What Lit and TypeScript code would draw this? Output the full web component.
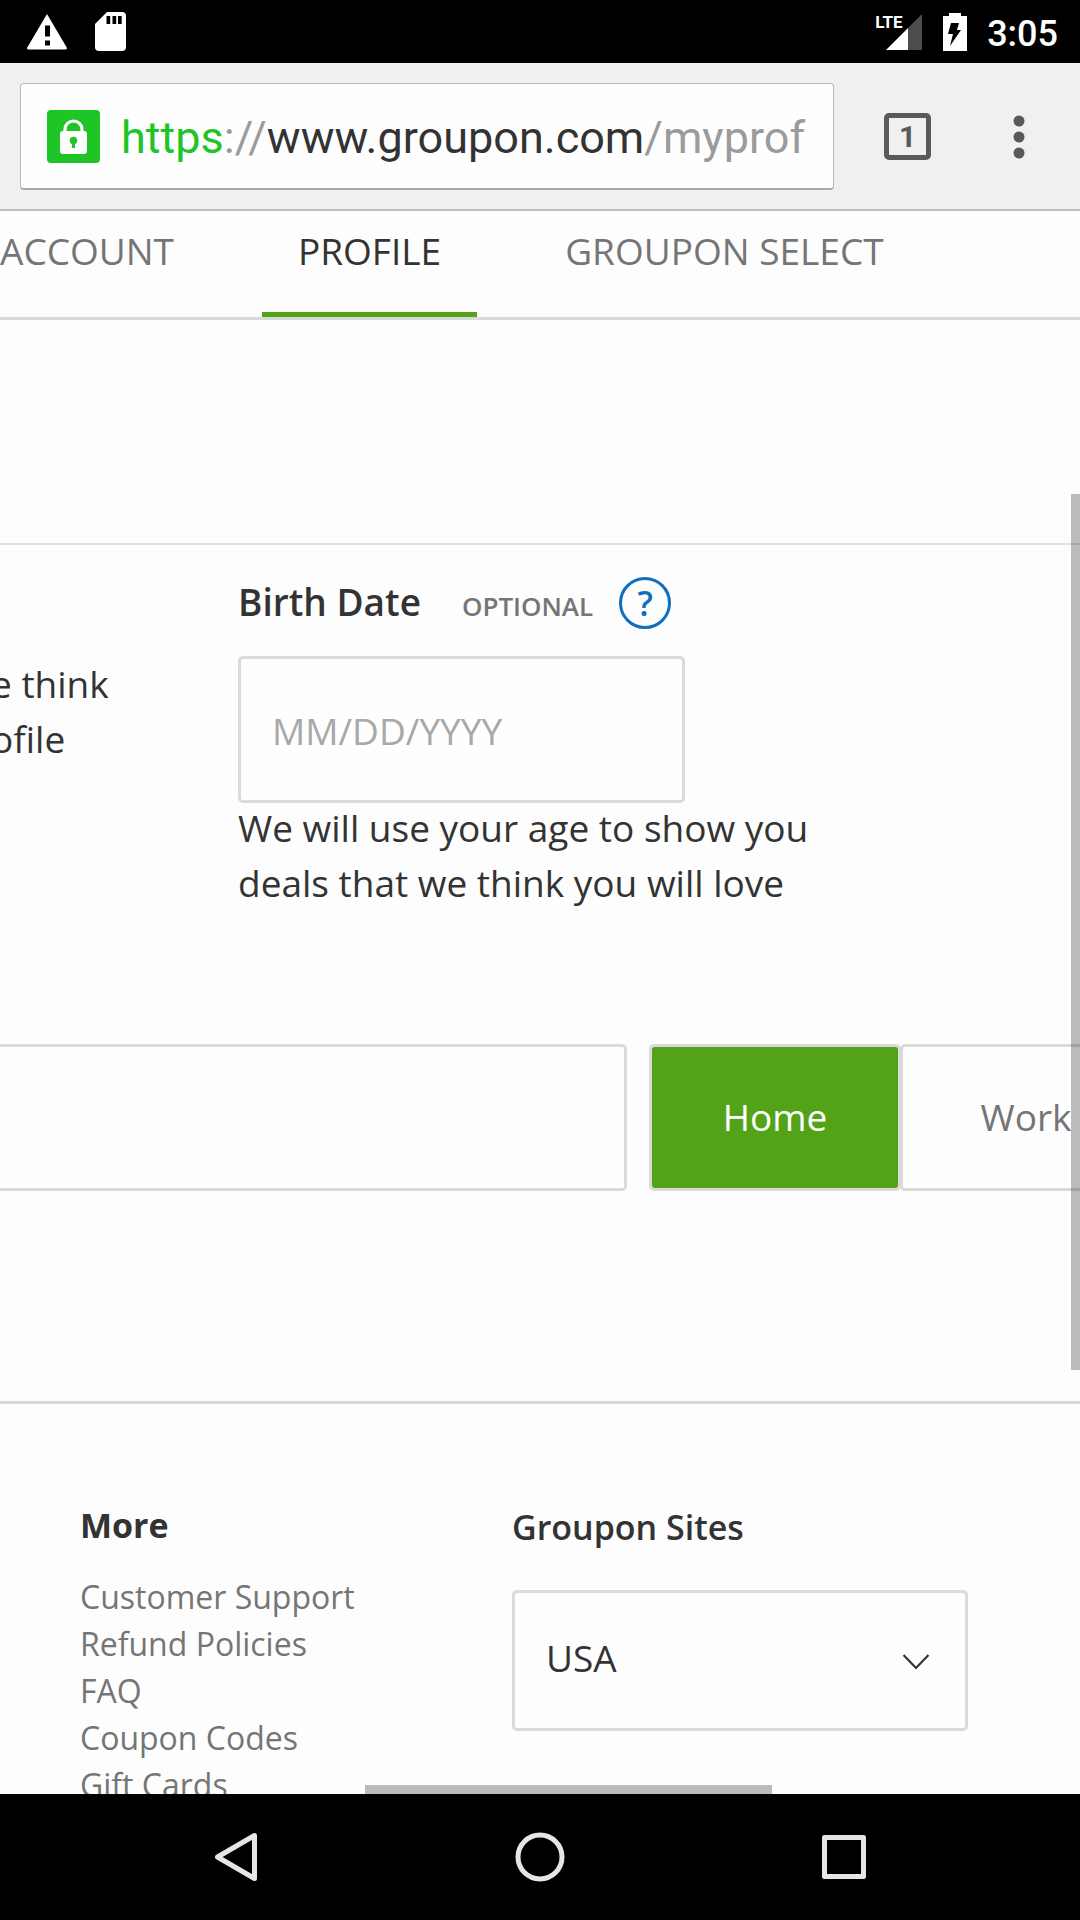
import { LitElement, html, css } from "lit";
import { customElement, state } from "lit/decorators.js";

@customElement("status-bar")
export class StatusBar extends LitElement {
  static styles = css`
    :host {
      display: flex;
      justify-content: space-between;
      align-items: center;
      height: 63px;
      padding: 0 22px 0 27px;
      background: #000;
      color: #fff;
      font-family: Roboto, "Noto Sans", sans-serif;
    }
    .group {
      display: flex;
      align-items: center;
    }
    .sd {
      margin-left: 28px;
    }
    .signal {
      position: relative;
      display: flex;
    }
    .lte {
      position: absolute;
      left: -2px;
      top: -1px;
      font: 700 17px/20px Roboto, sans-serif;
    }
    .battery {
      margin: 0 20px;
    }
    .clock {
      font-size: 36px;
      font-weight: 500;
      line-height: 42px;
      padding-top: 4px;
    }
  `;

  render() {
    return html`
      <div class="group">
        <svg width="40" height="36" viewBox="0 0 40 36" aria-label="Warning">
          <path d="M20 0 40 34Q40 35.500 38.500 35.500H1.500Q0 35.500 0 34Z" fill="#fff" />
          <path d="M18 11.500h5v11h-5zM18 26.500h5v5h-5z" fill="#000" />
        </svg>
        <svg class="sd" width="31" height="39" viewBox="0 0 31 39" aria-label="SD card">
          <path d="M12 0H27a4 4 0 0 1 4 4V35a4 4 0 0 1-4 4H4a4 4 0 0 1-4-4V12Z" fill="#fff" />
          <path d="M11.500 4h3.700v8h-3.700zM17.500 4h3.700v8h-3.700zM23 4h3.700v8H23z" fill="#000" />
        </svg>
      </div>
      <div class="group">
        <span class="signal">
          <svg width="46" height="38" viewBox="0 0 46 38" aria-hidden="true">
            <path d="M45 1V37H31V15Z" fill="#4d4d4d" />
            <path d="M31 15V37H9Z" fill="#fff" />
          </svg>
          <span class="lte">LTE</span>
        </span>
        <svg class="battery" width="24" height="38" viewBox="0 0 24 38" aria-label="Charging">
          <path d="M6 0H18V3H24V38H0V3H6Z" fill="#fff" />
          <path d="M8 10H16L14 17H18L7 33L10 21H5Z" fill="#000" />
        </svg>
        <span class="clock">3:05</span>
      </div>
    `;
  }
}

@customElement("browser-toolbar")
export class BrowserToolbar extends LitElement {
  static styles = css`
    :host {
      display: flex;
      align-items: center;
      box-sizing: border-box;
      height: 148px;
      padding: 1px 29px 0 20px;
      background: #f0f0f0;
      border-bottom: 2px solid #bdbdbd;
      font-family: Roboto, "Noto Sans", sans-serif;
    }
    .omnibox {
      flex: 1;
      min-width: 0;
      display: flex;
      align-items: center;
      gap: 21px;
      box-sizing: border-box;
      height: 107px;
      padding: 0 26px;
      background: #fefefe;
      border: 1px solid #bcbcbc;
      border-bottom: 2px solid #a8a8a8;
      border-radius: 4px;
      color: #9b9b9b;
      font-size: 45px;
      line-height: 56px;
      text-decoration: none;
      white-space: nowrap;
      overflow: hidden;
    }
    .lock {
      flex: none;
    }
    .url {
      padding-top: 4px;
    }
    .secure {
      color: #1fc427;
    }
    .domain {
      color: #333;
    }
    .tabs {
      flex: none;
      box-sizing: border-box;
      width: 47px;
      height: 47px;
      margin: 0 56px 0 50px;
      padding: 0;
      border: 5px solid #5a5a5a;
      border-radius: 5px;
      background: none;
      color: #5a5a5a;
      font: 700 30px/36px Roboto, sans-serif;
    }
    .menu {
      display: flex;
      justify-content: center;
      width: 64px;
      padding: 0;
      border: 0;
      background: none;
    }
  `;

  render() {
    return html`
      <a class="omnibox" href="https://www.groupon.com/myprof">
        <svg class="lock" width="53" height="53" viewBox="0 0 53 53" aria-label="Secure">
          <rect width="53" height="53" rx="4" fill="#1fc427" />
          <path d="M18 22V19.500a8.500 8.500 0 0 1 17 0V22" fill="none" stroke="#fff" stroke-width="3.200" />
          <rect x="13" y="21" width="27" height="23" rx="3" fill="#fff" />
          <circle cx="26.500" cy="30.500" r="3.800" fill="#1fc427" />
          <path d="M25 31h3v7h-3z" fill="#1fc427" />
        </svg>
        <span class="url"><span class="secure">https</span>://<span class="domain">www.groupon.com</span>/myprof</span>
      </a>
      <button class="tabs" aria-label="Open tabs">1</button>
      <button class="menu" aria-label="Menu">
        <svg width="12" height="44" viewBox="0 0 12 44">
          <g fill="#5a5a5a">
            <circle cx="6" cy="6" r="5.500" />
            <circle cx="6" cy="22" r="5.500" />
            <circle cx="6" cy="38" r="5.500" />
          </g>
        </svg>
      </button>
    `;
  }
}

@customElement("profile-page")
export class ProfilePage extends LitElement {
  @state() private place = "Home";

  static styles = css`
    :host {
      display: block;
      background: #fdfdfd;
      color: #333;
      font-family: "Open Sans", "Noto Sans", sans-serif;
      font-size: 37px;
      line-height: 55px;
    }
    a {
      color: #757575;
      text-decoration: none;
    }
    .tabs {
      display: flex;
      gap: 52px;
      padding-top: 12px;
      border-bottom: 3px solid #d9d9d9;
      white-space: nowrap;
    }
    .tab {
      padding: 0 36px 33px;
      border-bottom: 5px solid transparent;
      line-height: 56px;
    }
    .tab:first-child {
      padding-left: 0;
    }
    .tab.active {
      color: #333;
      border-color: #53a318;
    }
    .profile {
      display: grid;
      grid-template-columns: 238px 1fr;
      margin-top: 223px;
      border-top: 2px solid #e0e0e0;
    }
    .about {
      margin: 0;
      padding-top: 111px;
      margin-left: -9px;
    }
    .birth {
      max-width: 600px;
      padding-top: 32px;
    }
    .heading {
      display: flex;
      align-items: baseline;
      height: 52px;
      margin-bottom: 27px;
      line-height: 50px;
    }
    .label {
      font-weight: 600;
    }
    .optional {
      margin: 0 26px 0 41px;
      color: #757575;
      font-size: 26px;
      font-weight: 600;
    }
    .help {
      box-sizing: border-box;
      width: 52px;
      height: 52px;
      padding: 0;
      border: 3px solid #0f6fbd;
      border-radius: 50%;
      align-self: flex-start;
      background: none;
      color: #0f6fbd;
      font: 600 34px/46px "Open Sans", sans-serif;
    }
    .field {
      display: block;
      box-sizing: border-box;
      height: 147px;
      border: 3px solid #dadada;
      border-radius: 5px;
      background: #fefefe;
      color: #333;
      font: inherit;
    }
    .date {
      width: 447px;
      padding: 2px 31px 0;
    }
    .date::placeholder {
      color: #a8a8a8;
      opacity: 1;
    }
    .hint {
      margin: -3px 0 0;
    }
    .address {
      display: flex;
      margin: 134px 0 210px;
    }
    .location {
      flex: 1;
      min-width: 0;
      margin-right: 22px;
      border-left: 0;
      border-radius: 0 5px 5px 0;
    }
    .place {
      flex: none;
      width: 252px;
      padding: 0 0 2px;
      color: #757575;
    }
    .place.selected {
      background: #53a318;
      background-clip: padding-box;
      color: #fff;
    }
    .place:last-child {
      margin: 0 -72px 0 -1px;
    }
    .footer {
      display: grid;
      grid-template-columns: 432px 456px;
      padding: 98px 80px 40px;
      border-top: 3px solid #d9d9d9;
      font-size: 32px;
      line-height: 47px;
    }
    .more {
      margin: 0 0 24px;
      font-size: 34px;
      line-height: 47px;
    }
    .links {
      margin: 0;
      padding: 0;
      list-style: none;
    }
    .sites {
      display: block;
      margin-bottom: 37px;
      font-size: 34px;
      font-weight: 600;
      line-height: 51px;
    }
    .picker {
      position: relative;
    }
    .country {
      appearance: none;
      width: 100%;
      height: 141px;
      padding: 0 31px 6px;
      font-size: 37px;
    }
    .chevron {
      position: absolute;
      right: 38px;
      top: 63px;
      pointer-events: none;
    }
  `;

  private renderPlace(name: string) {
    return html`<button
      class="field place ${this.place === name ? "selected" : ""}"
      aria-pressed=${this.place === name}
      @click=${() => (this.place = name)}
    >${name}</button>`;
  }

  render() {
    const links = ["Customer Support", "Refund Policies", "FAQ", "Coupon Codes", "Gift Cards"];
    return html`
      <nav class="tabs">
        <a class="tab" href="#account">ACCOUNT</a>
        <a class="tab active" href="#profile" aria-current="page">PROFILE</a>
        <a class="tab" href="#select">GROUPON SELECT</a>
      </nav>
      <section class="profile">
        <p class="about">e think<br />ofile</p>
        <div class="birth">
          <div class="heading">
            <label class="label" for="birth">Birth Date</label>
            <span class="optional">OPTIONAL</span>
            <button class="help" aria-label="Why we ask">?</button>
          </div>
          <input class="field date" id="birth" type="text" placeholder="MM/DD/YYYY" />
          <p class="hint">We will use your age to show you deals that we think you will love</p>
        </div>
      </section>
      <section class="address">
        <input class="field location" type="text" aria-label="Address" />
        ${this.renderPlace("Home")}${this.renderPlace("Work")}
      </section>
      <footer class="footer">
        <div>
          <h2 class="more">More</h2>
          <ul class="links">
            ${links.map((name) => html`<li><a href="#">${name}</a></li>`)}
          </ul>
        </div>
        <div>
          <label class="sites" for="country">Groupon Sites</label>
          <div class="picker">
            <select class="field country" id="country">
              <option>USA</option>
            </select>
            <svg class="chevron" width="28" height="18" viewBox="0 0 28 18" aria-hidden="true">
              <path d="M1.500 2 14 15 26.500 2" fill="none" stroke="#333" stroke-width="2.200" />
            </svg>
          </div>
        </div>
      </footer>
    `;
  }
}

@customElement("app-root")
export class AppRoot extends LitElement {
  static styles = css`
    :host {
      display: flex;
      flex-direction: column;
      height: 100vh;
      background: #000;
    }
    .view {
      position: relative;
      flex: 1;
      min-height: 0;
      overflow: hidden;
      background: #fdfdfd;
    }
    .bar {
      position: absolute;
      background: rgba(0, 0, 0, 0.26);
    }
    .vertical {
      right: 0;
      top: 283px;
      width: 9px;
      height: 876px;
    }
    .horizontal {
      bottom: 0;
      left: 365px;
      width: 407px;
      height: 9px;
    }
    .system {
      display: flex;
      justify-content: center;
      gap: 240px;
      height: 126px;
    }
    .key {
      display: flex;
      align-items: center;
      justify-content: center;
      width: 64px;
      padding: 0;
      border: 0;
      background: none;
    }
  `;

  render() {
    return html`
      <status-bar></status-bar>
      <browser-toolbar></browser-toolbar>
      <main class="view">
        <profile-page></profile-page>
        <div class="bar vertical"></div>
        <div class="bar horizontal"></div>
      </main>
      <nav class="system">
        <button class="key" aria-label="Back">
          <svg width="52" height="52" viewBox="0 0 52 52" fill="none" stroke="#e6e6e6" stroke-width="5" stroke-linejoin="round">
            <path d="M44.500 4.500V47.500L7.500 26Z" />
          </svg>
        </button>
        <button class="key" aria-label="Home">
          <svg width="52" height="52" viewBox="0 0 52 52" fill="none" stroke="#e6e6e6" stroke-width="5">
            <circle cx="26" cy="26" r="22" />
          </svg>
        </button>
        <button class="key" aria-label="Recent apps">
          <svg width="52" height="52" viewBox="0 0 52 52" fill="none" stroke="#e6e6e6" stroke-width="5" stroke-linejoin="round">
            <rect x="6.500" y="6.500" width="39" height="39" />
          </svg>
        </button>
      </nav>
    `;
  }
}
